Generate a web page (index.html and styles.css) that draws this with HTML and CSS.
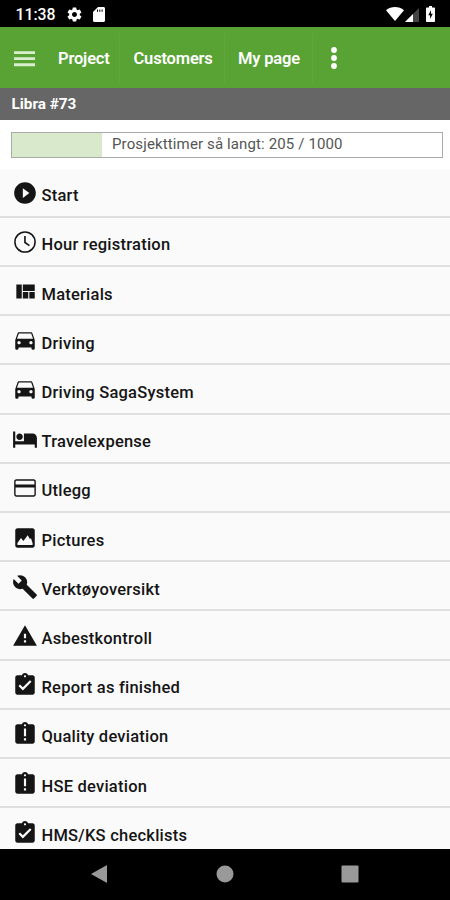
FILE: index.html
```html
<!DOCTYPE html>
<html lang="no">
<head>
<meta charset="utf-8">
<title>Libra #73</title>
<link rel="stylesheet" href="styles.css">
</head>
<body>
<svg class="defs" width="0" height="0">
  <symbol id="play" viewBox="0 0 24 24"><path d="M12 2C6.48 2 2 6.48 2 12s4.480 10 10 10 10-4.480 10-10S17.520 2 12 2zm-2 14.500v-9l6 4.500-6 4.500z"/></symbol>
  <symbol id="clock" viewBox="0 0 24 24"><circle cx="12" cy="12" r="9.300" fill="none" stroke="currentColor" stroke-width="1.400"/><path d="M11.200 6.500h1.500v5.600l3.800 2.600-.8 1.200-4.500-3z"/></symbol>
  <symbol id="quilt" viewBox="0 0 24 24"><path d="M10 18h5v-6h-5v6zm-6 0h5V5H4v13zm12 0h5v-6h-5v6zM10 5v6h11V5H10z"/></symbol>
  <symbol id="car" viewBox="0 0 24 24"><path d="M18.920 5.010C18.720 4.420 18.160 4 17.500 4h-11c-.66 0-1.210.42-1.420 1.010L3 11v8c0 .55.45 1 1 1h1c.55 0 1-.45 1-1v-1h12v1c0 .55.45 1 1 1h1c.55 0 1-.45 1-1v-8l-2.080-5.990zM6.500 15c-.83 0-1.500-.67-1.500-1.500S5.670 12 6.500 12s1.500.67 1.500 1.500S7.330 15 6.500 15zm11 0c-.83 0-1.500-.67-1.500-1.500s.67-1.500 1.500-1.500 1.500.67 1.500 1.500-.67 1.500-1.500 1.500zM4.600 10l1.700-5h11.400l1.700 5H4.600z"/></symbol>
  <symbol id="bed" viewBox="0 0 24 24"><path d="M7 13c1.660 0 3-1.340 3-3S8.660 7 7 7s-3 1.340-3 3 1.340 3 3 3zm12-6h-8v7H3V5H1v15h2v-3h18v3h2v-9c0-2.210-1.790-4-4-4z"/></symbol>
  <symbol id="card" viewBox="0 0 24 24"><path fill-rule="evenodd" d="M20 4H4c-1.110 0-2 .89-2 2v12c0 1.110.89 2 2 2h16c1.110 0 2-.89 2-2V6c0-1.110-.89-2-2-2zm.7 14c0 .4-.3.7-.7.700H4c-.4 0-.7-.3-.7-.700v-6.500h17.400V18zm0-9.300H3.300V6c0-.4.3-.7.700-.700h16c.4 0 .7.3.7.700v2.700z"/></symbol>
  <symbol id="image" viewBox="0 0 24 24"><path d="M21 19V5c0-1.100-.9-2-2-2H5c-1.100 0-2 .9-2 2v14c0 1.100.9 2 2 2h14c1.100 0 2-.9 2-2zM5 18.500v-2l3.300-4.500 2.200 2.800L14.500 9.500l2 3.500 1-.8 1.500 4.300v2z"/></symbol>
  <symbol id="wrench" viewBox="0 0 24 24"><path d="M22.700 19l-9.100-9.100c.9-2.300.4-5-1.500-6.900-2-2-5-2.400-7.400-1.300L9 6 6 9 1.600 4.700C.4 7.100.9 10.100 2.900 12.100c1.900 1.900 4.600 2.400 6.900 1.500l9.100 9.100c.4.4 1 .4 1.400 0l2.300-2.300c.5-.4.5-1.100.1-1.400z"/></symbol>
  <symbol id="warning" viewBox="0 0 24 24"><path d="M1 21h22L12 2 1 21zm12-3h-2v-2h2v2zm0-4h-2v-4h2v4z"/></symbol>
  <symbol id="done" viewBox="0 0 24 24"><path d="M19 3h-4.180C14.400 1.840 13.300 1 12 1c-1.300 0-2.400.84-2.820 2H5c-1.100 0-2 .9-2 2v14c0 1.100.9 2 2 2h14c1.100 0 2-.9 2-2V5c0-1.100-.9-2-2-2zm-7 0c.55 0 1 .45 1 1s-.45 1-1 1-1-.45-1-1 .45-1 1-1zm-2 14l-4-4 1.410-1.410L10 14.170l6.590-6.590L18 9l-8 8z"/></symbol>
  <symbol id="late" viewBox="0 0 24 24"><path d="M19 3h-4.180C14.400 1.840 13.300 1 12 1c-1.300 0-2.400.84-2.820 2H5c-1.100 0-2 .9-2 2v14c0 1.100.9 2 2 2h14c1.100 0 2-.9 2-2V5c0-1.100-.9-2-2-2zm-6 15h-2v-2h2v2zm0-4h-2V7h2v7zm-1-9c-.55 0-1-.45-1-1s.45-1 1-1 1 .45 1 1-.45 1-1 1z"/></symbol>
</svg>
<header class="status">
  <span class="time">11:38</span>
  <svg class="gear" viewBox="0 0 24 24"><path d="M19.430 12.980c.04-.32.07-.64.07-.98s-.03-.66-.07-.98l2.110-1.650c.19-.15.24-.42.12-.64l-2-3.460c-.12-.22-.39-.3-.61-.22l-2.490 1c-.52-.4-1.080-.73-1.690-.98l-.38-2.650C14.460 2.180 14.250 2 14 2h-4c-.25 0-.46.18-.49.42l-.38 2.650c-.61.25-1.170.59-1.690.98l-2.490-1c-.23-.09-.49 0-.61.22l-2 3.460c-.13.22-.07.49.12.64l2.110 1.650c-.04.32-.07.65-.07.98s.03.66.07.98l-2.110 1.650c-.19.15-.24.42-.12.64l2 3.460c.12.22.39.3.61.22l2.490-1c.52.4 1.080.73 1.690.98l.38 2.650c.03.24.24.42.49.42h4c.25 0 .46-.18.49-.42l.38-2.650c.61-.25 1.170-.59 1.690-.98l2.490 1c.23.09.49 0 .61-.22l2-3.460c.12-.22.07-.49-.12-.64l-2.110-1.650zM12 15.500c-1.930 0-3.500-1.570-3.500-3.500s1.570-3.500 3.500-3.500 3.500 1.570 3.500 3.500-1.570 3.500-3.500 3.500z"/></svg>
  <svg class="sd" viewBox="0 0 12 15"><path d="M5 0h5.500C11.400 0 12 .6 12 1.500v12c0 .9-.6 1.500-1.500 1.500h-9C.6 15 0 14.400 0 13.500V5z"/><path class="slots" d="M4.500 2.500v2.300M6.800 2.500v2.300M9.100 2.500v2.300"/></svg>
  <span class="grow"></span>
  <svg class="wifi" viewBox="0 0 18 14"><path d="M9 14L0 3.300C5-1.100 13-1.100 18 3.300z"/></svg>
  <svg class="signal" viewBox="0 0 14 14"><path class="dim" d="M14 0v14H0z"/><path d="M8 6v8H0z"/></svg>
  <svg class="battery" viewBox="0 0 9 16"><path d="M3 0h3v1.500h2c.6 0 1 .4 1 1V15c0 .6-.4 1-1 1H1c-.6 0-1-.4-1-1V2.500c0-.6.4-1 1-1h2z"/><path class="bolt" d="M5 4L2.300 9.300h1.800V13l2.700-5.200H5z"/></svg>
</header>
<nav class="nav">
  <svg class="burger" viewBox="0 0 20 15"><path d="M0 0h20v2.700H0zM0 5.800h20v2.700H0zM0 11.600h20v2.700H0z"/></svg>
  <a class="tab project">Project</a>
  <a class="tab customers">Customers</a>
  <a class="tab mypage">My page</a>
  <svg class="more" viewBox="0 0 6 22"><circle cx="3" cy="3" r="2.900"/><circle cx="3" cy="11" r="2.900"/><circle cx="3" cy="19" r="2.900"/></svg>
</nav>
<h1 class="title">Libra #73</h1>
<section class="progress"><div class="bar"><div class="fill"></div><span class="label">Prosjekttimer så langt: 205 / 1000</span></div></section>
<main class="list">
  <div class="row"><svg class="icon"><use href="#play"/></svg><span>Start</span></div>
  <div class="row"><svg class="icon"><use href="#clock"/></svg><span>Hour registration</span></div>
  <div class="row"><svg class="icon"><use href="#quilt"/></svg><span>Materials</span></div>
  <div class="row"><svg class="icon"><use href="#car"/></svg><span>Driving</span></div>
  <div class="row"><svg class="icon"><use href="#car"/></svg><span>Driving SagaSystem</span></div>
  <div class="row"><svg class="icon"><use href="#bed"/></svg><span>Travelexpense</span></div>
  <div class="row"><svg class="icon"><use href="#card"/></svg><span>Utlegg</span></div>
  <div class="row"><svg class="icon"><use href="#image"/></svg><span>Pictures</span></div>
  <div class="row"><svg class="icon"><use href="#wrench"/></svg><span>Verktøyoversikt</span></div>
  <div class="row"><svg class="icon"><use href="#warning"/></svg><span>Asbestkontroll</span></div>
  <div class="row"><svg class="icon"><use href="#done"/></svg><span>Report as finished</span></div>
  <div class="row"><svg class="icon"><use href="#late"/></svg><span>Quality deviation</span></div>
  <div class="row"><svg class="icon"><use href="#late"/></svg><span>HSE deviation</span></div>
  <div class="row"><svg class="icon"><use href="#done"/></svg><span>HMS/KS checklists</span></div>
</main>
<footer class="system">
  <svg viewBox="0 0 18 18"><path d="M17 0v18L1 9z"/></svg>
  <svg viewBox="0 0 18 18"><circle cx="9" cy="9" r="8.500"/></svg>
  <svg viewBox="0 0 18 18"><rect x=".5" y=".5" width="17" height="17" rx="1"/></svg>
</footer>
</body>
</html>
```
FILE: styles.css
```css
* { box-sizing: border-box; }
body {
  margin: 0;
  width: 450px;
  height: 900px;
  overflow: hidden;
  display: flex;
  flex-direction: column;
  background: #fff;
  font-family: Roboto, "Liberation Sans", sans-serif;
}
svg { display: block; flex: none; fill: currentColor; }
.defs { position: absolute; }
.status {
  flex: none;
  height: 27px;
  display: flex;
  align-items: center;
  padding: 1px 15px 0 15.500px;
  background: #000;
  color: #fff;
}
.time { width: 50px; font-size: 15.800px; font-weight: 500; line-height: 28px; padding-top: 1px; }
.gear { width: 17px; height: 17px; }
.sd { width: 12px; height: 15px; margin-left: 10px; }
.slots { stroke: #000; stroke-width: 1; }
.grow { flex: 1; }
.wifi { width: 18px; height: 14px; }
.signal { width: 14px; height: 14px; margin: 2px 7px 0 1px; }
.dim { fill: #444; }
.battery { width: 9px; height: 16px; }
.bolt { fill: #000; }
.nav {
  flex: none;
  height: 61px;
  display: flex;
  align-items: center;
  padding-left: 14px;
  background: #58a333;
  color: #fff;
}
.burger { width: 21px; height: 16px; margin-top: 2px; color: #d9eecd; }
.tab {
  height: 50px;
  line-height: 51px;
  font-size: 16.500px;
  font-weight: 600;
  letter-spacing: -0.18px;
  white-space: nowrap;
  border-right: 1px solid #65a33c;
}
.project { margin-left: 23px; width: 62px; }
.customers { padding-left: 13.500px; width: 105px; }
.mypage { padding-left: 13px; width: 88px; }
.more { width: 6px; height: 22px; margin-left: 17.500px; }
.title {
  flex: none;
  height: 32px;
  margin: 0;
  padding-left: 11.500px;
  background: #666;
  color: #fff;
  font-size: 15.300px;
  font-weight: 700;
  line-height: 32px;
}
.progress { flex: none; height: 48.600px; padding: 12px 7px 0 11px; }
.bar {
  height: 26px;
  display: flex;
  border: 1px solid #aaa;
  background: #fff;
}
.fill { width: 90px; background: #d9e9cb; }
.label { margin-left: 10px; font-size: 15px; letter-spacing: 0.13px; line-height: 23px; color: #555; white-space: nowrap; }
.list { flex: none; height: 680.400px; overflow: hidden; background: #fafafa; }
.row {
  height: 49.210px;
  display: flex;
  padding: 11.600px 0 0 11.700px;
  border-bottom: 2px solid #e0e0e0;
  color: #151515;
  font-size: 16.500px;
  font-weight: 500;
  letter-spacing: 0.230px;
  line-height: 31px;
  white-space: nowrap;
}
.row .icon { width: 26px; height: 26px; margin-right: 3.800px; }
.system {
  flex: 1;
  display: flex;
  justify-content: space-between;
  padding: 16px 91px 0 90px;
  background: #000;
  color: #999;
}
.system svg { width: 18px; height: 18px; }
```
